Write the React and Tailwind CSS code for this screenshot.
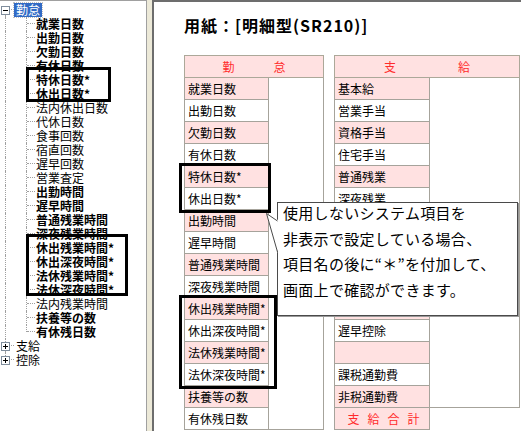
import React from "react";
import clsx from "clsx";

const treeItems = [
  ["就業日数", true],
  ["出勤日数", true],
  ["欠勤日数", true],
  ["有休日数", true],
  ["特休日数*", true],
  ["休出日数*", true],
  ["法内休出日数", false],
  ["代休日数", false],
  ["食事回数", false],
  ["宿直回数", false],
  ["遅早回数", false],
  ["営業査定", false],
  ["出勤時間", true],
  ["遅早時間", true],
  ["普通残業時間", true],
  ["深夜残業時間", true],
  ["休出残業時間*", true],
  ["休出深夜時間*", true],
  ["法休残業時間*", true],
  ["法休深夜時間*", true],
  ["法内残業時間", false],
  ["扶養等の数", true],
  ["有休残日数", true],
];

const kintaiRows = [
  "就業日数",
  "出勤日数",
  "欠勤日数",
  "有休日数",
  "特休日数*",
  "休出日数*",
  "出勤時間",
  "遅早時間",
  "普通残業時間",
  "深夜残業時間",
  "休出残業時間*",
  "休出深夜時間*",
  "法休残業時間*",
  "法休深夜時間*",
  "扶養等の数",
  "有休残日数",
];

// rows 7-11 sit under the callout, so they stay blank
const shikyuRows = [
  "基本給",
  "営業手当",
  "資格手当",
  "住宅手当",
  "普通残業",
  "深夜残業",
  "",
  "",
  "",
  "",
  "",
  "遅早控除",
  "",
  "課税通勤費",
  "非税通勤費",
];

const dot = "border-dotted border-[#a0a0a0]";

function ExpandBox({ open }) {
  return (
    <div className="ml-[1px] w-[9px] h-[9px] border border-[#7f8d9c] bg-white flex items-center justify-center relative">
      <div className="w-[5px] h-px bg-black" />
      {!open && <div className="absolute w-px h-[5px] bg-black" />}
    </div>
  );
}

function RootRow({ label, open, top, bottom, selected }) {
  return (
    <div className="flex h-[14px]">
      <div className="w-[11px] h-full flex flex-col">
        <div className={clsx("ml-[5px] h-[3px]", top && `border-l ${dot}`)} />
        <ExpandBox open={open} />
        <div className={clsx("ml-[5px] h-[2px]", bottom && `border-l ${dot}`)} />
      </div>
      <div className={`w-[3px] h-[7px] border-b ${dot}`} />
      <span
        className={clsx(
          "px-[2px] text-[12px] leading-[14px] whitespace-nowrap",
          selected && "bg-[#316ac5] text-white outline outline-1 outline-dotted outline-[#c0c0c0]"
        )}
      >
        {label}
      </span>
    </div>
  );
}

function ChildRow({ label, bold, last }) {
  return (
    <div className="flex h-[14px]">
      <div className="w-[26px] h-full">
        <div className={`ml-[5px] h-full border-l ${dot}`} />
      </div>
      <div className={clsx(`w-[9px] border-l ${dot}`, last ? "h-[7px]" : "h-full")}>
        <div className={`h-[7px] border-b ${dot}`} />
      </div>
      <span
        className={clsx(
          "ml-[1px] text-[12px] leading-[14px] whitespace-nowrap",
          bold && "font-bold"
        )}
      >
        {label}
      </span>
    </div>
  );
}

function Cell({ children, pink, className }) {
  return (
    <div
      className={clsx(
        "h-[22px] border-x border-b border-[#a6a39b] pl-[3px] flex items-center text-[12px] whitespace-nowrap",
        pink ? "bg-[#ffe1e1]" : "bg-white",
        className
      )}
    >
      {children}
    </div>
  );
}

export default function App() {
  return (
    <div className="relative flex w-[521px] h-[431px] overflow-hidden bg-white text-black font-['Noto_Sans_CJK_JP',sans-serif]">
      {/* tree */}
      <div className="w-[147px] h-full border-r border-t border-[#a0a0a0] pt-[2px] bg-white">
        <RootRow label="勤怠" open bottom selected />
        {treeItems.map(([label, bold], i) => (
          <ChildRow key={label} label={label} bold={bold} last={i === treeItems.length - 1} />
        ))}
        <RootRow label="支給" top bottom />
        <RootRow label="控除" top />
      </div>

      {/* splitter */}
      <div className="w-[5px] h-full bg-[#ece9d8]" />

      {/* sheet */}
      <div className="flex-1 h-full border-l-2 border-t-2 border-[#6d6d6d] bg-white">
        <div className="mt-[13px] pl-[30px] text-[16px] leading-[20px] font-bold tracking-[1px] whitespace-nowrap">
          用紙：[明細型(SR210)]
        </div>

        <div className="mt-[20px] pl-[30px] flex gap-[10px] items-start">
          {/* 勤怠 */}
          <div className="w-[140px] flex flex-col">
            <div className="h-[23px] border border-[#aca899] bg-[#ffe1e1] flex items-center justify-center gap-[39px] text-[12px] text-[#ff2b2b]">
              <span>勤</span>
              <span>怠</span>
            </div>
            <div className="flex">
              <div className="w-[85px] flex flex-col">
                {kintaiRows.map((r, i) => (
                  <Cell key={r} pink={i % 2 === 0}>
                    {r}
                  </Cell>
                ))}
              </div>
              <div className="w-[55px] h-[352px] border-r border-b border-[#a6a39b]" />
            </div>
          </div>

          {/* 支給 */}
          <div className="w-[186px] flex flex-col">
            <div className="h-[23px] border border-[#aca899] bg-[#ffe1e1] flex items-center justify-center gap-[62px] text-[12px] text-[#ff2b2b]">
              <span>支</span>
              <span>給</span>
            </div>
            <div className="flex items-start">
              <div className="w-[96px] flex flex-col">
                {shikyuRows.map((r, i) => (
                  <Cell key={i} pink={i % 2 === 0}>
                    {r}
                  </Cell>
                ))}
                <Cell pink className="justify-center gap-[8px] pl-0 text-[#ff2b2b]">
                  <span>支</span>
                  <span>給</span>
                  <span>合</span>
                  <span>計</span>
                </Cell>
              </div>
              <div className="w-[90px] h-[330px] border-r border-b border-[#a6a39b]" />
            </div>
          </div>
        </div>
      </div>

      {/* highlight frames */}
      <div className="absolute left-[26px] top-[67px] w-[85px] h-[35px] border-[3px] border-black" />
      <div className="absolute left-[26px] top-[234px] w-[102px] h-[62px] border-[3px] border-black" />
      <div className="absolute left-[179px] top-[163px] w-[92px] h-[50px] border-[3px] border-black" />
      <div className="absolute left-[179px] top-[295px] w-[98px] h-[94px] border-[3px] border-black" />

      {/* callout */}
      <div className="absolute left-[277px] top-[202px] w-[241px] h-[114px] border border-[#4a4a4a] bg-white shadow-[1px_1px_0_#9a9a9a] pl-[5px]">
        <div className="-mt-[3px] text-[15px] leading-[25.5px] tracking-[0.3px] whitespace-nowrap">
          <div>使用しないシステム項目を</div>
          <div>非表示で設定している場合、</div>
          <div>項目名の後に“＊”を付加して、</div>
          <div>画面上で確認ができます。</div>
        </div>
      </div>
      <svg className="absolute left-[264px] top-[210px]" width="16" height="45" viewBox="0 0 16 45">
        <polygon points="2,3 14,10 14,43 " fill="white" />
        <polyline points="13.5,11 2.5,3.5 13.5,42" fill="none" stroke="#4a4a4a" strokeWidth="1" />
      </svg>
    </div>
  );
}
